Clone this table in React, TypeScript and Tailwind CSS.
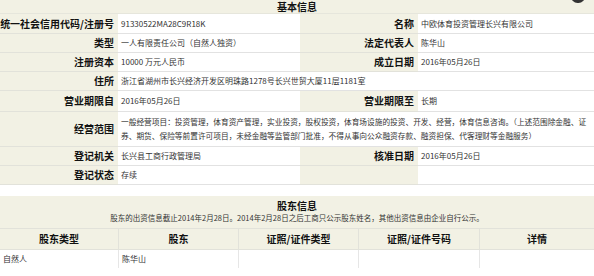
import React from "react";

const F = { fontFamily: '"Noto Sans CJK SC", "Noto Sans", sans-serif' };

function Label({ children, h }: { children: React.ReactNode; h: number }) {
  return (
    <div
      className="flex items-center justify-end bg-[#f2f1e4] border-b border-[#e2e2da] pr-[4px] text-[10px] font-bold text-[#111] leading-none"
      style={{ height: h }}
    >
      {children}
    </div>
  );
}

function Value({ children, h, span }: { children?: React.ReactNode; h: number; span?: boolean }) {
  return (
    <div
      className={`flex items-center bg-white border-b border-[#e2e2e2] pl-[3px] text-[8px] text-[#333] leading-[14px] ${span ? "col-span-3" : ""}`}
      style={{ height: h }}
    >
      <div>{children}</div>
    </div>
  );
}

export default function App() {
  return (
    <div className="relative w-[594px] h-[276px] bg-white overflow-hidden" style={F}>
      <div className="absolute right-[9px] top-[-10px] w-[14px] h-[13px] rounded-full bg-[#333]" />
      {/* 基本信息 */}
      <div className="h-[14px] bg-[#f2f1e4] border-b border-[#e6e6dc] flex items-center justify-center text-[10px] font-bold text-[#111] leading-none">
        基本信息
      </div>
      <div className="grid grid-cols-[118px_182px_118px_176px]">
        <Label h={20}>统一社会信用代码/注册号</Label>
        <Value h={20}>91330522MA28C9R18K</Value>
        <Label h={20}>名称</Label>
        <Value h={20}>中欧体育投资管理长兴有限公司</Value>

        <Label h={19}>类型</Label>
        <Value h={19}>一人有限责任公司（自然人独资）</Value>
        <Label h={19}>法定代表人</Label>
        <Value h={19}>陈华山</Value>

        <Label h={19}>注册资本</Label>
        <Value h={19}>10000 万元人民币</Value>
        <Label h={19}>成立日期</Label>
        <Value h={19}>2016年05月26日</Value>

        <Label h={19}>住所</Label>
        <Value h={19} span>浙江省湖州市长兴经济开发区明珠路1278号长兴世贸大厦11层1181室</Value>

        <Label h={21}>营业期限自</Label>
        <Value h={21}>2016年05月26日</Value>
        <Label h={21}>营业期限至</Label>
        <Value h={21}>长期</Value>

        <Label h={35}>经营范围</Label>
        <div className="col-span-3 h-[35px] flex items-center bg-white border-b border-[#e2e2e2] pl-[3px] text-[7.7px] text-[#333] leading-[14px] whitespace-nowrap">
          <div>
            一般经营项目：投资管理，体育资产管理，实业投资，股权投资，体育场设施的投资、开发、经营，体育信息咨询。（上述范围除金融、证
            <br />
            券、期货、保险等前置许可项目，未经金融等监管部门批准，不得从事向公众融资存款、融资担保、代客理财等金融服务）
          </div>
        </div>

        <Label h={19}>登记机关</Label>
        <Value h={19}>长兴县工商行政管理局</Value>
        <Label h={19}>核准日期</Label>
        <Value h={19}>2016年05月26日</Value>

        <Label h={19}>登记状态</Label>
        <Value h={19}>存续</Value>
        <Label h={19}>{""}</Label>
        <Value h={19}></Value>
      </div>

      {/* 股东信息 */}
      <div className="mt-[11px] h-[33px] bg-[#f2f1e4] border-b border-[#e2e2da] flex flex-col items-center pt-[5px] leading-none">
        <div className="text-[10px] font-bold text-[#111]">股东信息</div>
        <div className="mt-[3px] text-[7.5px] text-[#333]">
          股东的出资信息截止2014年2月28日。2014年2月28日之后工商只公示股东姓名，其他出资信息由企业自行公示。
        </div>
      </div>
      <div className="grid grid-cols-[119px_120px_120px_121px_114px]">
        {["股东类型", "股东", "证照/证件类型", "证照/证件号码", "详情"].map((t, i) => (
          <div
            key={t}
            className={`h-[21px] bg-[#f2f1e4] flex items-center justify-center text-[10px] font-bold text-[#111] leading-none border-b border-[#e2e2da] ${i < 4 ? "border-r border-r-[#e2e2da]" : ""}`}
          >
            {t}
          </div>
        ))}
        {["自然人", "陈华山", "", "", ""].map((t, i) => (
          <div
            key={i}
            className={`h-[18px] bg-white flex items-center pl-[3px] text-[8px] text-[#333] leading-none ${i < 4 ? "border-r border-[#e6e6e6]" : ""}`}
          >
            {t}
          </div>
        ))}
      </div>
    </div>
  );
}
